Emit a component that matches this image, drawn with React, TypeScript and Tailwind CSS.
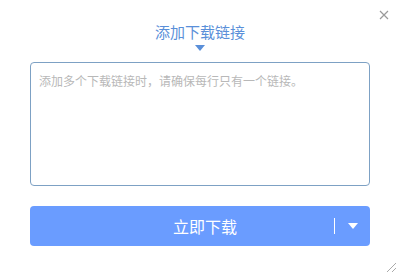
export default function App() {
  return (
    <div
      className="relative w-[400px] h-[276px] bg-white flex flex-col items-center"
      style={{ fontFamily: '"Microsoft YaHei", "Noto Sans CJK SC", sans-serif' }}
    >
      {/* Close */}
      <button className="absolute right-[10px] top-[9px] w-[12px] h-[12px] flex items-center justify-center text-[#999]">
        <svg width="10" height="10" viewBox="0 0 10 10">
          <path d="M1 1L9 9M9 1L1 9" stroke="#9a9a9a" strokeWidth="1.2" />
        </svg>
      </button>

      {/* Title */}
      <div className="mt-[22px] flex flex-col items-center">
        <span className="text-[15px] leading-[20px] text-[#5a8fd9]">添加下载链接</span>
        <svg width="10" height="6" viewBox="0 0 10 6" className="mt-[3px]">
          <path d="M0 0H10L5 6Z" fill="#5a8fd9" />
        </svg>
      </div>

      {/* Textarea */}
      <textarea
        autoFocus
        placeholder="添加多个下载链接时，请确保每行只有一个链接。"
        className="mt-[11px] w-[340px] h-[124px] resize-none rounded-[4px] border border-[#7da1c4] px-[8px] py-[10px] text-[12px] leading-[16px] text-[#333] placeholder:text-[#b8b8b8] outline-none"
      />

      {/* Download button */}
      <div className="mt-[20px] w-[340px] h-[40px] rounded-[4px] bg-[#6a9cff] flex items-center text-white">
        <span className="flex-1 text-center pl-[46px] text-[16px]">立即下载</span>
        <span className="w-px h-[16px] bg-white" />
        <span className="w-[35px] flex items-center justify-center">
          <svg width="10" height="6" viewBox="0 0 10 6">
            <path d="M0 0H10L5 6Z" fill="#fff" />
          </svg>
        </span>
      </div>

      {/* Resize grip */}
      <svg width="12" height="12" viewBox="0 0 12 12" className="absolute right-[3px] bottom-[3px]">
        <path d="M11 2L2 11M11 7L7 11" stroke="#aaa" strokeWidth="1" />
      </svg>
    </div>
  );
}
